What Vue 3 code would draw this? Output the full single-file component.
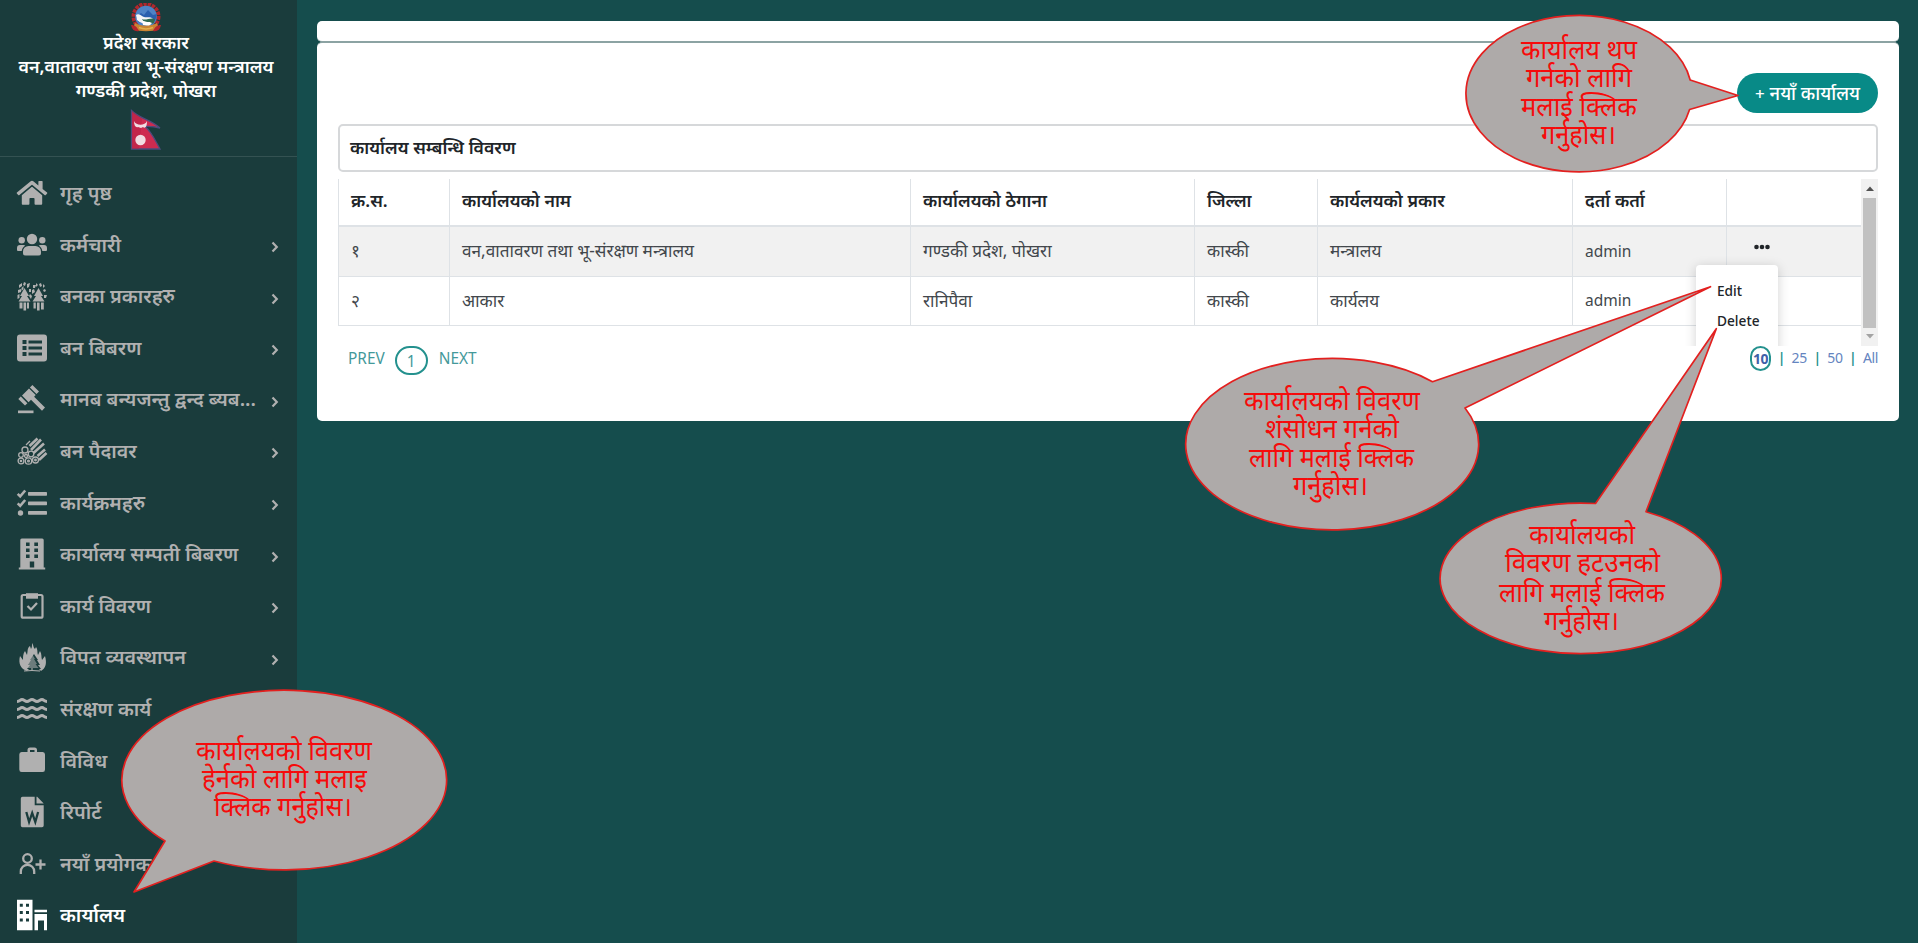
<script setup>
const menu = [
  { icon: 'home', label: 'गृह पृष्ठ' },
  { icon: 'users', label: 'कर्मचारी', more: true },
  { icon: 'forest', label: 'बनका प्रकारहरु', more: true },
  { icon: 'list', label: 'बन बिबरण', more: true },
  { icon: 'gavel', label: 'मानब बन्यजन्तु द्वन्द ब्यब...', more: true },
  { icon: 'logs', label: 'बन पैदावर', more: true },
  { icon: 'tasks', label: 'कार्यक्रमहरु', more: true },
  { icon: 'building', label: 'कार्यालय सम्पती बिबरण', more: true },
  { icon: 'clipboard', label: 'कार्य विवरण', more: true },
  { icon: 'fire', label: 'विपत व्यवस्थापन', more: true },
  { icon: 'waves', label: 'संरक्षण कार्य' },
  { icon: 'briefcase', label: 'विविध' },
  { icon: 'word', label: 'रिपोर्ट' },
  { icon: 'userplus', label: 'नयाँ प्रयोगक' },
  { icon: 'office', label: 'कार्यालय', active: true },
]
const headers = ['क्र.स.', 'कार्यालयको नाम', 'कार्यालयको ठेगाना', 'जिल्ला', 'कार्यलयको प्रकार', 'दर्ता कर्ता', '']
const rows = [
  ['१', 'वन,वातावरण तथा भू-संरक्षण मन्त्रालय', 'गण्डकी प्रदेश, पोखरा', 'कास्की', 'मन्त्रालय', 'admin'],
  ['२', 'आकार', 'रानिपैवा', 'कास्की', 'कार्यलय', 'admin'],
]
const callouts = [
  {
    d: 'M1690.2 80 L1738 95.5 L1689.6 109.5 A113 78.2 0 1 1 1690.2 80 Z',
    lines: [
      { t: 'कार्यालय थप', x: 1521, y: 59, w: 116 },
      { t: 'गर्नको लागि', x: 1526, y: 87, w: 106 },
      { t: 'मलाई क्लिक', x: 1521, y: 116, w: 116 },
      { t: 'गर्नुहोस।', x: 1541, y: 144, w: 75 },
    ],
  },
  {
    d: 'M1432.5 381.7 L1710.5 286.7 L1465 408 A146.5 85.7 0 1 1 1432.5 381.7 Z',
    lines: [
      { t: 'कार्यालयको विवरण', x: 1244, y: 410, w: 176 },
      { t: 'शंसोधन गर्नको', x: 1265, y: 438, w: 134 },
      { t: 'लागि मलाई क्लिक', x: 1249, y: 467, w: 165 },
      { t: 'गर्नुहोस।', x: 1293, y: 495, w: 75 },
    ],
  },
  {
    d: 'M1595.5 503.5 L1716.3 328.7 L1646 511.7 A140.6 75.3 0 1 1 1595.5 503.5 Z',
    lines: [
      { t: 'कार्यालयको', x: 1529, y: 544, w: 106 },
      { t: 'विवरण हटउनको', x: 1505, y: 572, w: 155 },
      { t: 'लागि मलाई क्लिक', x: 1499, y: 602, w: 166 },
      { t: 'गर्नुहोस।', x: 1544, y: 630, w: 75 },
    ],
  },
  {
    d: 'M165 841 L134 892 L214 861 A162.4 89.8 0 1 0 165 841 Z',
    lines: [
      { t: 'कार्यालयको विवरण', x: 196, y: 760, w: 176 },
      { t: 'हेर्नको लागि मलाइ', x: 202, y: 788, w: 165 },
      { t: 'क्लिक गर्नुहोस।', x: 214, y: 816, w: 138 },
    ],
  },
]
</script>

<template>
  <div class="page">
    <aside class="sidebar">
      <header class="brand">
        <svg class="emblem" viewBox="0 0 32 29">
          <circle cx="16" cy="13.5" r="12.5" fill="none" stroke="#b3262c" stroke-width="4" stroke-dasharray="3.4 .9" />
          <circle cx="16" cy="13.5" r="10.8" fill="#4f83c6" />
          <path d="M6 14 11 10l3 2 4-5 5 5 4-1-2 7-8 3-9-2z" fill="#2b5fae" />
          <path d="M6 12c3-2 5 1 8 2s6-1 9 2l-2 5c-5 1-11-1-14-4z" fill="#f5f5f5" />
          <path d="M12 16c4 2 8-2 13 0l-1 4c-4 2-7-1-11-2z" fill="#2f6b52" />
          <path d="M12 17c4 3 7 1 10 3l-3 3-6-1z" fill="#fff" />
          <path d="M5 20c5 3 15 4 22 0l2 6c-6 3-20 3-26 0z" fill="#c98432" />
          <path d="M1 22c4 0 6 2 8 6-4 1-7-1-8-6zM31 22c-4 0-6 2-8 6 4 1 7-1 8-6z" fill="#b3262c" />
          <path d="M9 24.5c5 2 9 2 14 0" stroke="#e3b04b" stroke-width="1.5" fill="none" />
        </svg>
        <div class="brand-line">प्रदेश सरकार</div>
        <div class="brand-line">वन,वातावरण तथा भू-संरक्षण मन्त्रालय</div>
        <div class="brand-line">गण्डकी प्रदेश, पोखरा</div>
        <svg class="flag" viewBox="0 0 32 42">
          <path d="M1.5 1.5C10 10 20 10 30 19 26 18 22 17 15 17.500 21 22 25 31 30 40H1.500z" fill="#ce2b50" stroke="#4b4c7d" stroke-width="1.3" />
          <path d="M2 2 12 10 9 40H2z" fill="#b51f43" opacity=".5" />
          <path d="M4 12c2 5 11 5 13 0 0 8-3 7-4 6l-2 1-3-1c-2 1-4-1-4-6z" fill="#f1dce2" />
          <circle cx="10.500" cy="31" r="5.200" fill="#f1dce2" />
        </svg>
      </header>
      <nav class="menu">
        <a v-for="m in menu" :key="m.label" class="item" :class="{ active: m.active }">
          <svg class="icon" viewBox="0 0 32 32" fill="currentColor">
            <g v-if="m.icon === 'home'" transform="translate(.7 2.200) scale(.0531)">
              <path d="M280.370 148.260L96 300.110V464a16 16 0 0 0 16 16l112.060-.29a16 16 0 0 0 15.920-16V368a16 16 0 0 1 16-16h64a16 16 0 0 1 16 16v95.640a16 16 0 0 0 16 16.050L464 480a16 16 0 0 0 16-16V300L295.670 148.260a12.190 12.190 0 0 0-15.300 0zM571.600 251.470L488 182.560V44.050a12 12 0 0 0-12-12h-56a12 12 0 0 0-12 12v72.610L318.470 43a48 48 0 0 0-61 0L4.340 251.470a12 12 0 0 0-1.600 16.900l25.500 31A12 12 0 0 0 45.150 301l235.220-193.740a12.190 12.190 0 0 1 15.300 0L530.900 301a12 12 0 0 0 16.900-1.600l25.500-31a12 12 0 0 0-1.700-16.930z" />
            </g>
            <g v-else-if="m.icon === 'users'">
              <circle cx="16" cy="10" r="5.200" /><circle cx="5.700" cy="11.300" r="3.200" /><circle cx="26.300" cy="11.300" r="3.200" />
              <path d="M12.500 17h7a5.500 5.500 0 0 1 5.500 5.500V24a2.600 2.600 0 0 1-2.600 2.600H9.600A2.600 2.600 0 0 1 7 24v-1.500A5.500 5.500 0 0 1 12.500 17z" />
              <path d="M4 16h3.500l1.800.6C7 18 6 20 5.700 22H2.300C1.500 22 1 21.400 1 20.700V19a3 3 0 0 1 3-3zM28 16h-3.500l-1.800.6C25 18 26 20 26.300 22h3.400c.8 0 1.300-.6 1.300-1.300V19a3 3 0 0 0-3-3z" />
            </g>
            <g v-else-if="m.icon === 'forest'">
              <path d="M8.500 8 13 16h-2l3.500 5.500H2.500L6 16H4zM22.500 8 27 16h-2l3.500 5.500h-12L20 16h-2z" />
              <path d="M3.500 22.500h3v6h-3zM7.500 22.500h2.600v8H7.500zM11 22.500h2v6h-2zM17.500 22.500h2.300v6h-2.300zM21 22.500h2.600v8H21zM25 22.500h2.800v7H25z" />
              <path d="M3 5l3-2 0 3-3 2zM8 2l2 1-1 3-2-1zM11 4l3-1-1 4-2 1zM2 10l3-1 0 3-3 1zM13 9l2 0 0 3-2 0zM17 5l3 0-1 3-2 0zM23 4l2-1 1 3-2 1zM27 4l2 2-2 2zM28 9l2 1-1 2-2-1zM16 10l2-1 1 3-3 2zM1.500 15l2-1 0 4-2 1zM14 14l2 2-1 3-2-3zM28 15l3 0-1 3-2 0zM20 3l2 2-2 2zM5.500 8l2-2 0 3-2 2z" />
            </g>
            <path v-else-if="m.icon === 'list'" fill-rule="evenodd" d="M4 2.500h24a3 3 0 0 1 3 3v21a3 3 0 0 1-3 3H4a3 3 0 0 1-3-3v-21a3 3 0 0 1 3-3zM6.500 8v4h4V8zM6.500 14v4h4v-4zM6.500 20v4h4v-4zM12.500 8.500v3H26v-3zM12.500 14.500v3H26v-3zM12.500 20.500v3H26v-3z" />
            <g v-else-if="m.icon === 'gavel'">
              <rect x="2" y="27.500" width="15.500" height="2.700" />
              <path d="M16.400 2 23 8.600l-2.500 2.400-6.600-6.600zM4.800 13.500l6.600 6.700L9 22.600 2.300 16zM13 5.500 19.700 12l-1.600 1.700L29 24.600 26 27.800 15 16.800l-2.400 2.400L6 12.500z" />
            </g>
            <g v-else-if="m.icon === 'logs'" fill="none" stroke="currentColor" stroke-width="1.300">
              <path d="m13.500 11 8-7.500M15 15 25 4.500M17.500 18 28 8.500M21.500 21 29 14.500M23 25l7.500-7" stroke-width="2.600" />
              <path d="m10 10 4-4" />
              <circle cx="9" cy="15" r="3" /><circle cx="15" cy="19" r="2.800" /><circle cx="5" cy="20" r="2.300" /><circle cx="10" cy="21" r="1.500" />
              <circle cx="5" cy="26" r="2.900" /><circle cx="12.500" cy="26" r="3.200" /><circle cx="19.500" cy="25" r="3" />
              <circle cx="5" cy="26" r=".7" /><circle cx="12.500" cy="26" r=".9" /><circle cx="19.500" cy="25" r=".8" />
            </g>
            <g v-else-if="m.icon === 'tasks'">
              <rect x="12" y="5" width="19" height="3.700" rx=".7" /><rect x="12" y="14.500" width="19" height="3.700" rx=".7" /><rect x="12" y="24" width="19" height="3.700" rx=".7" />
              <circle cx="4.500" cy="26" r="2.700" />
              <path d="m1.700 6.800 2.500 2.500 5-5.800M1.700 16.300l2.500 2.500 5-5.800" fill="none" stroke="currentColor" stroke-width="2.600" />
            </g>
            <path v-else-if="m.icon === 'building'" fill-rule="evenodd" d="M5.800.5h20.400a1.500 1.500 0 0 1 1.500 1.500v27.500h1.500v2H2.800v-2h1.500V2A1.500 1.500 0 0 1 5.800.5zM10 4.500V8h3.600V4.500zM18.300 4.500V8H22V4.500zM10 10.500V14h3.600v-3.500zM18.300 10.500V14H22v-3.500zM10 16.500V20h3.600v-3.500zM18.300 16.500V20H22v-3.500zM13.800 23.500v6h4.400v-6z" />
            <g v-else-if="m.icon === 'clipboard'" fill="none" stroke="currentColor">
              <rect x="5.700" y="5" width="20.800" height="22.700" rx="1.500" stroke-width="2.200" />
              <path d="M10 3.200h12v5.500H10z" fill="currentColor" stroke="none" />
              <path d="m11.500 16 3.500 3.500 6-6.500" stroke-width="2.200" />
            </g>
            <g v-else-if="m.icon === 'fire'">
              <path d="M16 1c2 3 1 4 3 6l1-2c2 3 1 5 2 8l2-4c2 3 1 6 2 9l3-4c2 7 1 12-4 15l-2-2h2l-3-4h2l-3-5h1l-4-6-4 6h1l-3 5h2l-3 4h2l-2 2c-6-2-9-7-7-15l3 4c0-4 0-6 2-9l2 4c1-4 0-7 3-9l1 3c1-2 1-3 1-6z" transform="translate(0 1)" />
              <path d="m15.500 12 3.500 6h-1l3 5h-1.500l3 4h-5.500v2h-2v-2H9.500l3-4H11l3-5h-1z" opacity=".55" />
              <path d="M8 29.500q8-1 16 0v1q-8-1-16 0z" />
            </g>
            <g v-else-if="m.icon === 'waves'" fill="none" stroke="currentColor" stroke-width="3">
              <path d="M1 8.500c3 0 3-2 5-2s3 2 5 2 3-2 5-2 3 2 5 2 3-2 5-2 2 2 5 2M1 16.500c3 0 3-2 5-2s3 2 5 2 3-2 5-2 3 2 5 2 3-2 5-2 2 2 5 2M1 24.500c3 0 3-2 5-2s3 2 5 2 3-2 5-2 3 2 5 2 3-2 5-2 2 2 5 2" />
            </g>
            <path v-else-if="m.icon === 'briefcase'" fill-rule="evenodd" d="M11.500 7V5A2.500 2.500 0 0 1 14 2.500h4.500A2.500 2.500 0 0 1 21 5v2h5.300A2.500 2.500 0 0 1 29 9.500v15a2.500 2.500 0 0 1-2.700 2.500H6a2.500 2.500 0 0 1-2.700-2.500v-15A2.500 2.500 0 0 1 6 7zM14 5v2h4.500V5z" />
            <g v-else-if="m.icon === 'word'">
              <path fill-rule="evenodd" d="M6.500.8h12.200V9.300h9v20.200a1.700 1.700 0 0 1-1.700 1.700H6.500a1.700 1.700 0 0 1-1.700-1.700v-27A1.700 1.700 0 0 1 6.500.8zM20.500.8h.7l6.500 6.700h-7.200z" />
              <path d="m10.300 16 2.800 10 3.100-9 3.100 9 2.800-10" fill="none" stroke="#1a3c3c" stroke-width="2.300" />
            </g>
            <g v-else-if="m.icon === 'userplus'" fill="none" stroke="currentColor" stroke-width="2.300">
              <circle cx="11.500" cy="10.500" r="4.300" /><path d="M4.800 26v-2.500a6.700 6.700 0 0 1 13.400 0V26M19.500 16.500h10M24.500 11.500v10" />
            </g>
            <g v-else>
              <path fill-rule="evenodd" d="M1 .8h15.500v30.400H1zM3.800 4.800v3h3v-3zM10 4.800v3h3v-3zM3.800 12v3h3v-3zM10 12v3h3v-3zM3.800 19.500v3h3v-3zM10 19.500v3h3v-3zM18.500 10.800H31v2.500H18.500zM18.500 15H31v16.200h-3V21.500h-6v9.700h-3.500z" />
            </g>
          </svg>
          <span class="label">{{ m.label }}</span>
          <svg v-if="m.more" class="chev" viewBox="0 0 8 12"><path d="m1.500 1.500 4.300 4.500-4.300 4.500" fill="none" stroke="currentColor" stroke-width="2.200" /></svg>
        </a>
      </nav>
    </aside>

    <main class="content">
      <div class="strip"></div>
      <section class="panel">
        <div class="toolbar"><button class="add"><span>+</span> नयाँ कार्यालय</button></div>
        <div class="caption">कार्यालय सम्बन्धि विवरण</div>
        <div class="table-wrap">
          <div class="grid">
            <div v-for="(h, i) in headers" :key="'h' + i" class="cell head">{{ h }}</div>
            <template v-for="(r, ri) in rows" :key="ri">
              <div v-for="(c, ci) in r" :key="ci" class="cell" :class="{ odd: ri === 0, latin: ci === 5 }">{{ c }}</div>
              <div class="cell action" :class="{ odd: ri === 0 }">
                <svg v-if="ri === 0" class="dots" viewBox="0 0 16 6"><circle cx="2.500" cy="3" r="2.300" /><circle cx="8" cy="3" r="2.300" /><circle cx="13.500" cy="3" r="2.300" /></svg>
              </div>
            </template>
          </div>
          <div class="scroll">
            <svg viewBox="0 0 8 5"><path d="M0 5 4 .5 8 5z" fill="#505050" /></svg>
            <div class="thumb"></div>
            <svg viewBox="0 0 8 5"><path d="M0 0 4 4.500 8 0z" fill="#a3a3a3" /></svg>
          </div>
          <div class="pop-clip">
            <div class="pop"><div>Edit</div><div>Delete</div></div>
          </div>
        </div>
        <footer class="pager">
          <div class="pages"><span>PREV</span><span class="current">1</span><span>NEXT</span></div>
          <div class="sizes"><b>10</b><i>|</i><span>25</span><i>|</i><span>50</span><i>|</i><span>All</span></div>
        </footer>
      </section>
    </main>

    <svg class="callouts" viewBox="0 0 1918 943">
      <g v-for="(c, i) in callouts" :key="i">
        <path :d="c.d" fill="#aeaaa9" stroke="#e3201f" stroke-width="1.700" stroke-linejoin="round" />
        <text v-for="l in c.lines" :key="l.t" :x="l.x" :y="l.y" :textLength="l.w" lengthAdjust="spacingAndGlyphs">{{ l.t }}</text>
      </g>
    </svg>
  </div>
</template>

<style>
body { margin: 0; overflow: hidden; }
</style>

<style scoped>
.page {
  position: relative;
  display: flex;
  width: 1918px;
  height: 943px;
  overflow: hidden;
  background: #154d4d;
  font-family: "Noto Sans", "Noto Sans Devanagari", sans-serif;
}
.page * { box-sizing: border-box; }
.sidebar { width: 297px; flex: none; background: #1a3c3c; }
.brand {
  display: flex;
  flex-direction: column;
  align-items: center;
  height: 157px;
  padding: 3px 5px 0 0;
  border-bottom: 1px solid #345252;
  color: #fff;
}
.emblem { width: 32px; height: 29px; margin-bottom: -2px; flex: none; }
.brand-line { height: 24px; line-height: 24px; font-size: 17.900px; font-weight: 600; white-space: nowrap; }
.flag { width: 32px; height: 42px; margin-top: 7px; flex: none; }
.menu { padding-top: 10.200px; }
.item { display: flex; align-items: center; height: 51.600px; padding-left: 16px; color: #b0b0b0; }
.item.active { color: #fff; }
.icon { width: 32px; height: 32px; flex: none; }
.label { width: 211px; flex: none; margin-left: 12px; font-size: 19.700px; font-weight: 600; line-height: 28px; white-space: nowrap; }
.chev { width: 8px; height: 12px; margin-top: 5px; flex: none; }
.content { flex: 1; padding: 21px 19px 0 20px; }
.strip { height: 21px; background: #fff; border-radius: 5px; border-bottom: 1px solid #8ca3a3; }
.panel { height: 379px; padding: 30px 21px 0; background: #fff; border-radius: 5px; border-top: 1px solid #8ca3a3; }
.toolbar { display: flex; justify-content: flex-end; }
.add { width: 141px; height: 40px; padding: 0; border: 0; border-radius: 20px; background: #088a87; color: #fff; font: 500 18.400px/40px "Noto Sans", sans-serif; white-space: nowrap; }
.add span { font-size: 17px; }
.caption { height: 48px; margin-top: 11px; padding-left: 10px; border: 2px solid #d6d8da; border-radius: 5px; color: #212529; font-size: 17.700px; font-weight: 600; line-height: 43px; }
.table-wrap { position: relative; display: flex; height: 167px; margin-top: 7px; }
.grid { display: grid; flex: 1; grid-template-columns: 111px 461px 284px 123px 255px 154px 1fr; grid-template-rows: 48px 49.500px 49.500px; }
.cell { display: flex; align-items: center; padding: 0 0 1px 12px; border-left: 1px solid #dee2e6; border-bottom: 1px solid #dee2e6; color: #42474c; font-size: 17.200px; white-space: nowrap; }
.cell.latin { font-size: 15.500px; }
.head { padding-bottom: 5px; border-bottom-width: 2px; color: #212529; font-size: 17.700px; font-weight: 600; }
.odd { background: #f1f1f1; }
.action { padding: 0 0 8px 27px; }
.dots { width: 16px; height: 6px; fill: #212529; }
.scroll { display: flex; flex-direction: column; align-items: center; justify-content: space-between; width: 17px; padding: 7px 0; background: #f1f1f1; }
.scroll svg { width: 8px; height: 5px; }
.thumb { width: 13px; height: 130px; background: #c1c1c1; }
.pop-clip { position: absolute; right: 85px; top: 70px; width: 112px; height: 97px; overflow: hidden; padding: 16px 15px 0; }
.pop { width: 82px; height: 100px; padding: 11px 0 0 21px; border-radius: 4px; background: #fff; box-shadow: 0 2px 12px rgba(0, 0, 0, .18); color: #212529; font-size: 13.700px; font-weight: 500; line-height: 30px; }
.pager { display: flex; justify-content: space-between; height: 30px; }
.pages { display: flex; padding-left: 10px; color: #44999a; font-size: 15.400px; line-height: 25px; }
.current { width: 33px; height: 29px; margin: 0 11px 0 10px; border: 2px solid #24918e; border-radius: 15px; text-align: center; line-height: 27px; }
.sizes { display: flex; padding-right: 0; color: #6484c0; font-size: 14px; letter-spacing: -.4px; line-height: 24px; }
.sizes b { width: 21px; height: 25px; border: 2px solid #24918e; border-radius: 11px; color: #4060a8; line-height: 22px; text-align: center; font-weight: 700; display: flex; justify-content: center; }
.sizes i { width: 20.500px; text-align: center; font-weight: 600; color: #24918e; font-style: normal; }
.callouts { position: absolute; left: 0; top: 0; width: 1918px; height: 943px; pointer-events: none; }
.callouts text { fill: #f60b0b; font-size: 27px; }
</style>
